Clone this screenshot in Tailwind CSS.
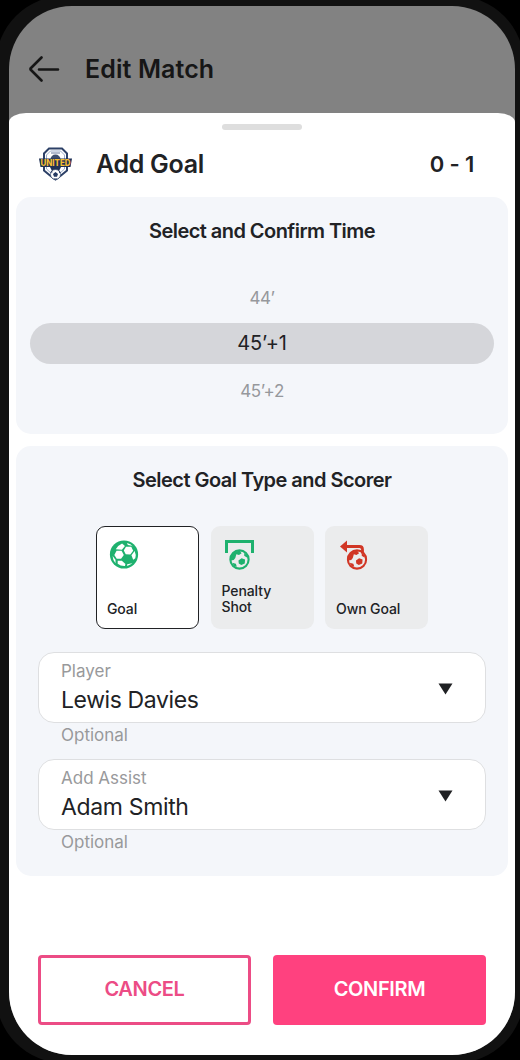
<!DOCTYPE html>
<html lang="en">
<head>
<meta charset="utf-8">
<title>Add Goal</title>
<script src="https://cdn.jsdelivr.net/npm/@tailwindcss/browser@4"></script>
</head>
<body class="h-[1060px] w-[520px] overflow-hidden bg-black font-['Inter','Liberation_Sans',sans-serif] text-[#212225]">
<svg class="hidden">
  <symbol id="ball" viewBox="0 0 30 30">
    <circle cx="15" cy="15" r="14.600" fill="currentColor"/>
    <g fill="#fff">
      <path d="M7.300 11h5.200l2.300 4.500-2.800 4H7.500L5 15.500z"/>
      <path d="M17 7h5.500l2 4-3 4-4.700-.200-2-4z"/>
      <path d="M6.500 9.500q2-4 6.500-6l3 2.700-3.200 4z"/>
      <path d="M18 3q4 .700 6.500 4L23 6l-4-.700z"/>
      <path d="M26 11.500q1.700 3.500.700 7.500l-2.200 1.500-1.800-4.700z"/>
      <path d="M3.200 16.500l3 4v3.500q-2.700-3-3-7.500z"/>
      <path d="M8.500 21.500h4.300l3.700 3.200-.500 2.300q-4.500.200-7.500-2.500z"/>
      <path d="M18.300 25.200l5-1.200 1.700-1.500q-2.500 3.500-6.700 4.300z"/>
    </g>
  </symbol>
  <symbol id="miniball" viewBox="0 0 20 20">
    <circle cx="10" cy="10" r="8.700" fill="none" stroke="currentColor" stroke-width="2"/>
    <path fill="currentColor" d="M9 11l3-2.300 3.300 1.300-.300 3.900-3.300 1.300-2.400-1.400zM5 3l5-1.500L12 4l-2.500 1.800L7 5 6 8.500 4.500 10.500l-3 .500V7zM14.500 3.500l3 3-.500 1.500-2.500-1.500zM3 13l3.500 1 1 3-2.500-.500z"/>
  </symbol>
</svg>
<div class="-mx-1 -mt-1 h-[1067px] w-[528px] rounded-[68px] bg-[#111111] pt-[9.500px] pl-[13px]">
  <div class="flex h-[1049px] w-[506px] flex-col overflow-hidden rounded-[63px] bg-[#828282]">
    <header class="flex h-[107.500px] shrink-0 items-center gap-[25px] pt-[19px] pl-5 text-[#161616]">
      <svg class="h-[26px] w-[31px]" viewBox="0 0 31 26" fill="none" stroke="currentColor" stroke-width="2.600" stroke-linecap="round" stroke-linejoin="round"><path d="M12.500 1.500L1.500 12.500v1l11 11M10 13.500h19"/></svg>
      <h1 class="text-[25px] leading-8 font-semibold tracking-[0.1px]">Edit Match</h1>
    </header>
    <main class="flex grow flex-col rounded-tl-[17px_9px] rounded-tr-[17px_9px] bg-white px-[7px]">
      <div class="mx-auto mt-[11px] h-[6px] w-20 rounded-full bg-[#dedede]"></div>
      <div class="flex h-[67px] items-center pr-[34px] pl-[23px]">
        <svg class="h-[34px] w-[33px]" viewBox="0 0 33 34">
          <path d="M10 1.500h13l5 5v17l-6 5-5.500 4L11 28.500l-6-5v-17z" fill="#fff" stroke="#2c4067" stroke-width="2"/>
          <path d="M11.500 4h10l4 4v14l-5 4.500h-8L7.500 22V8z" fill="none" stroke="#9dadc9" stroke-width="1"/>
          <path d="M12 6h9" stroke="#66789c" stroke-width="1"/>
          <circle cx="16.500" cy="12.500" r="5" fill="#3d4d6c"/>
          <path d="M0 11.500h33l-1.500 8.500h-30z" fill="#1f3156"/>
          <path d="M11 20h11l-2 4h-7z" fill="#1f3156"/>
          <circle cx="16.500" cy="27.500" r="5" fill="#fff" stroke="#2c4067" stroke-width=".7"/>
          <path d="M16.500 25l2.500 2-1 2.700h-3l-1-2.700zM11 25.500l2-2 .500 2zM20 23.500l2 2-2 .500zM14 31.500l2.500 1 2.500-1" fill="#263a63"/>
          <text x="16.500" y="18.600" text-anchor="middle" textLength="30" lengthAdjust="spacingAndGlyphs" font-family="Inter, sans-serif" font-size="8.500" font-weight="800" fill="#f5bd30">UNITED</text>
        </svg>
        <h2 class="ml-6 grow text-[25px] leading-8 font-semibold tracking-[-0.3px]">Add Goal</h2>
        <span class="text-[22px] leading-8 font-semibold tracking-[-0.2px]">0 - 1</span>
      </div>

      <section class="h-[237px] w-[492px] shrink-0 rounded-[15px] bg-[#f4f6fa] px-[14px] pt-[22px] text-center">
        <h3 class="text-[20px] leading-6 font-semibold tracking-[-0.55px]">Select and Confirm Time</h3>
        <div class="mt-[30px] h-[50px] text-[17px] leading-[50px] tracking-[-0.5px] text-[#96989c]">44’</div>
        <div class="h-[41px] w-[464px] rounded-full bg-[#d5d6da] text-[20px] leading-[40px] tracking-[-0.2px]">45’+1</div>
        <div class="h-[54px] text-[17px] leading-[54px] tracking-[-0.4px] text-[#96989c]">45’+2</div>
      </section>

      <section class="mt-3 h-[430px] w-[492px] shrink-0 rounded-[15px] bg-[#f4f6fa] px-[22px] pt-[22px]">
        <h3 class="text-center text-[20px] leading-6 font-semibold tracking-[-0.53px]">Select Goal Type and Scorer</h3>
        <div class="mt-[34px] ml-[58px] flex gap-[11.500px] text-[14px] leading-4 font-medium tracking-[-0.1px]">
          <div class="flex h-[103px] w-[103px] flex-col justify-between rounded-[9px] border-[1.500px] border-[#212225] bg-white px-[10px] pt-[13px] pb-[11px]">
            <svg class="ml-[2px] h-[29px] w-[30px] text-[#1eb16e]"><use href="#ball"/></svg><span>Goal</span>
          </div>
          <div class="flex h-[103px] w-[103px] flex-col justify-between rounded-[9px] bg-[#ebeced] px-[11px] pt-[14px] pb-[14px]">
            <svg class="ml-[3px] h-[30px] w-[29px] text-[#1eb16e]" viewBox="0 0 29 30"><path d="M1.500 13V1.500h26V13" fill="none" stroke="currentColor" stroke-width="3"/><use href="#miniball" x="4" y="9" width="21" height="21"/></svg><span>Penalty<br>Shot</span>
          </div>
          <div class="flex h-[103px] w-[103px] flex-col justify-between rounded-[9px] bg-[#ebeced] px-[11px] pt-[14px] pb-[12px]">
            <svg class="ml-[4px] h-[30px] w-[29px] text-[#d13625]" viewBox="0 0 29 30"><path d="M6 6.500h13.500q3 0 3 3v4" fill="none" stroke="currentColor" stroke-width="2.800"/><path d="M0 6.500L7 .500v12z" fill="currentColor"/><use href="#miniball" x="6.500" y="9" width="21" height="21"/></svg><span>Own Goal</span>
          </div>
        </div>
        <div class="mt-[23px] flex h-[71px] w-[448px] items-center justify-between rounded-[16px] border-[1.500px] border-[#dedfe1] bg-white pr-[32px] pl-[22px]">
          <div><div class="text-[17px] leading-[22px] text-[#98999b]">Player</div><div class="mt-[3px] mb-px text-[23px] leading-[30px] tracking-[-0.4px]">Lewis Davies</div></div>
          <svg class="mt-[3px] h-3 w-[15px]" viewBox="0 0 15 12"><path d="M.500 .500h14L7.500 11.500z" fill="#202124"/></svg>
        </div>
        <div class="h-9 pl-[23px] text-[17px] leading-[25px] text-[#98999b]">Optional</div>
        <div class="flex h-[71px] w-[448px] items-center justify-between rounded-[16px] border-[1.500px] border-[#dedfe1] bg-white pr-[32px] pl-[22px]">
          <div><div class="text-[17px] leading-[22px] text-[#98999b]">Add Assist</div><div class="mt-[3px] mb-px text-[23px] leading-[30px] tracking-[-0.35px]">Adam Smith</div></div>
          <svg class="mt-[3px] h-3 w-[15px]" viewBox="0 0 15 12"><path d="M.500 .500h14L7.500 11.500z" fill="#202124"/></svg>
        </div>
        <div class="pl-[23px] text-[17px] leading-[25px] text-[#98999b]">Optional</div>
      </section>

      <div class="mt-[79px] flex gap-[22px] pl-[22px] text-[20px] leading-6 font-semibold tracking-[-0.35px]">
        <button class="h-[70px] w-[213px] rounded-[4px] border-[3px] border-[#ec4c85] pb-[2px] text-[#ec4c85]">CANCEL</button>
        <button class="h-[70px] w-[213px] rounded-[4px] bg-[#ff417f] pb-[2px] text-white">CONFIRM</button>
      </div>
    </main>
  </div>
</div>
</body>
</html>
